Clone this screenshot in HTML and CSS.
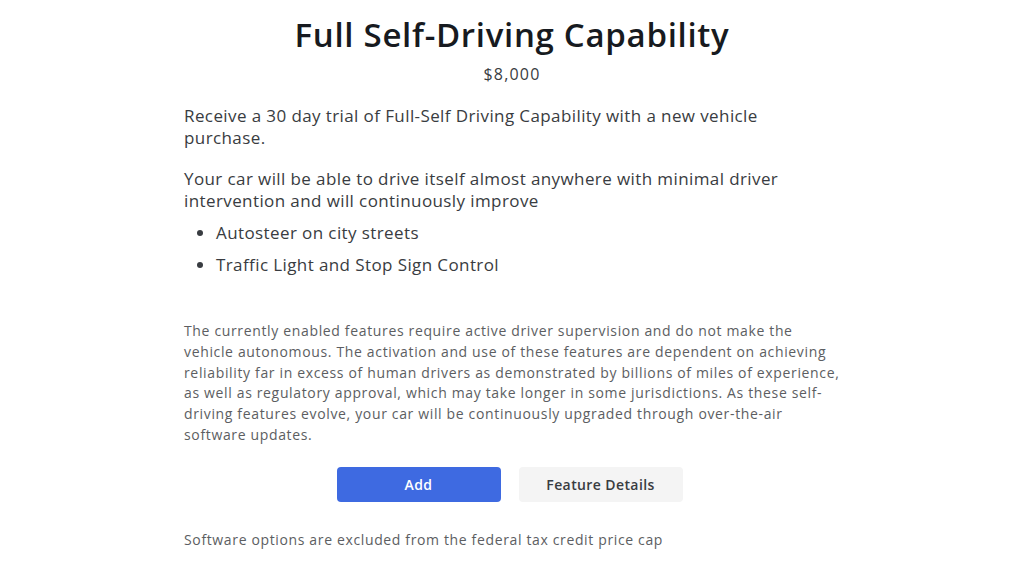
FILE: index.html
```html
<!DOCTYPE html>
<html>
<head>
<meta charset="utf-8">
<link rel="stylesheet" href="styles.css">
</head>
<body>
<main class="panel">
  <h1 class="title">Full Self-Driving Capability</h1>
  <div class="price">$8,000</div>
  <p class="lead">Receive a 30 day trial of Full-Self Driving Capability with a new vehicle purchase.</p>
  <p class="lead lead-2">Your car will be able to drive itself almost anywhere with minimal driver intervention and will continuously improve</p>
  <ul class="features">
    <li>Autosteer on city streets</li>
    <li>Traffic Light and Stop Sign Control</li>
  </ul>
  <p class="disclaimer">The currently enabled features require active driver supervision and do not make the vehicle autonomous. The activation and use of these features are dependent on achieving reliability far in excess of human drivers as demonstrated by billions of miles of experience, as well as regulatory approval, which may take longer in some jurisdictions. As these self-driving features evolve, your car will be continuously upgraded through over-the-air software updates.</p>
  <div class="actions">
    <button class="btn btn-primary">Add</button>
    <button class="btn btn-secondary">Feature Details</button>
  </div>
  <p class="note">Software options are excluded from the federal tax credit price cap</p>
</main>
</body>
</html>
```
FILE: styles.css
```css
html, body {
  margin: 0;
  padding: 0;
  background: #ffffff;
}
body {
  font-family: "Open Sans", "Liberation Sans", sans-serif;
  color: #393c41;
}
.panel {
  width: 656px;
  margin: 0 auto;
  display: flex;
  flex-direction: column;
  padding-top: 14px;
}
.title {
  margin: 0;
  text-align: center;
  font-size: 33px;
  font-weight: 600;
  color: #171a20;
  line-height: 42px;
  letter-spacing: 0.7px;
}
.price {
  text-align: center;
  font-size: 16px;
  font-weight: 500;
  color: #393c41;
  margin-top: 8px;
  line-height: 20px;
  letter-spacing: 1.2px;
}
.lead {
  margin: 21px 0 0;
  font-size: 17px;
  line-height: 22px;
  letter-spacing: 0.4px;
}
.lead-2 {
  margin-top: 19px;
}
.features {
  margin: 10px 0 0;
  padding-left: 32px;
  font-size: 17px;
  line-height: 22px;
  letter-spacing: 0.4px;
}
.features li {
  margin-bottom: 10px;
}
.disclaimer {
  margin: 35px 0 0;
  font-size: 14px;
  line-height: 20.8px;
  color: #5c5e62;
  letter-spacing: 0.65px;
}
.actions {
  display: flex;
  justify-content: center;
  gap: 18px;
  margin-top: 21px;
  padding-right: 5px;
}
.btn {
  width: 164px;
  height: 35px;
  border: none;
  border-radius: 4px;
  font-family: inherit;
  font-size: 14px;
  font-weight: 600;
  letter-spacing: 0.4px;
  cursor: pointer;
}
.btn-primary {
  background: #3e6ae1;
  color: #ffffff;
}
.btn-secondary {
  background: #f4f4f4;
  color: #393c41;
}
.note {
  margin: 28px 0 0;
  font-size: 14px;
  line-height: 20px;
  color: #5c5e62;
  letter-spacing: 0.64px;
}
```
